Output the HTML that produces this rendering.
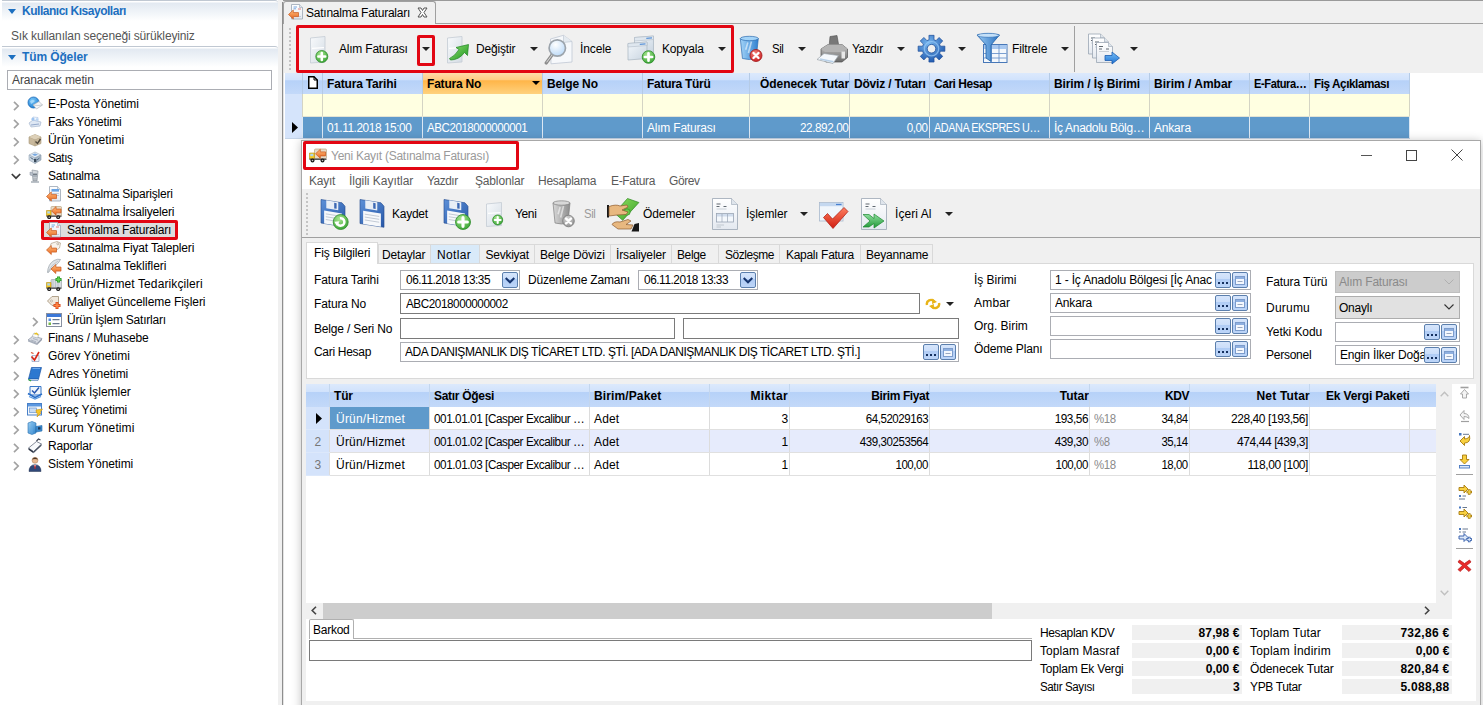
<!DOCTYPE html>
<html lang="tr"><head><meta charset="utf-8"><title>Satınalma Faturaları</title>
<style>
*{box-sizing:border-box;margin:0;padding:0}
html,body{width:1483px;height:705px;overflow:hidden;background:#f0f0f0}
body{position:relative;font-family:"Liberation Sans",sans-serif;font-size:12px;color:#000;letter-spacing:-0.17px}
.a{position:absolute}
.t{position:absolute;white-space:nowrap;line-height:14px;height:14px}
.b{font-weight:bold;letter-spacing:-0.2px}
.n{letter-spacing:-0.5px}
.g{color:#555}
.w{color:#fff}
.hd{position:absolute;left:2px;width:276px;height:21px;background:linear-gradient(#fff 0,#fff 1px,#e2e9f1 2px,#f1f5f9 60%,#fff);border-top:1px solid #c0c8d2;border-radius:0 3px 0 0}
.hd .t{left:20px;top:3px;color:#1c6fc0;font-weight:bold;letter-spacing:-0.48px}
.hd i{position:absolute;left:6px;top:8px;border:4px solid transparent;border-top:5px solid #1c6fc0;border-bottom:0}
.chev{position:absolute;width:6px;height:6px;border-right:1.4px solid #8a8a8a;border-top:1.4px solid #8a8a8a;transform:rotate(45deg)}
.chevd{position:absolute;width:6px;height:6px;border-right:1.4px solid #404040;border-bottom:1.4px solid #404040;transform:rotate(45deg)}
.gh{position:absolute;background:linear-gradient(#dce9fc 0,#d0e2fc 35%,#b6d1f8 36%,#c3d9f9 100%)}
.gho{position:absolute;background:linear-gradient(#ffdcaa 0,#ffcb80 35%,#ffb548 36%,#ffd27e 100%)}
.inp{position:absolute;background:#fff;border:1px solid #abadb3}
.inpd{position:absolute;background:#fff;border:1px solid #7a7a7a}
.eb{position:absolute;width:16px;height:16px;border:1px solid #5b7fad;border-radius:2px;background:linear-gradient(#d6e5fb 0,#cbdefa 42%,#b0ccf5 43%,#bdd5f8 100%)}
</style></head><body>
<!-- left panel -->
<div class="a" style="left:0px;top:0px;width:278px;height:705px;background:#fff"></div>
<div class="hd" style="top:0"><i></i><span class="t">Kullanıcı Kısayolları</span></div>
<div class="t " style="left:11px;top:29px;color:#555;letter-spacing:-0.14px">Sık kullanılan seçeneği sürükleyiniz</div>
<div class="hd" style="top:46px"><i></i><span class="t" style="letter-spacing:-0.12px">Tüm Öğeler</span></div>
<div class="a" style="left:7px;top:70px;width:265px;height:20px;border:1px solid #abadb3;background:#fff"></div>
<div class="t " style="left:12px;top:73px;color:#444;letter-spacing:-0.12px">Aranacak metin</div>
<svg class="a" style="left:12.5px;top:100.5px" width="7" height="10" viewBox="0 0 7 10"><path d="M1 .8L5.2 5L1 9.2" fill="none" stroke="#a2a2a2" stroke-width="1.7"/></svg>
<svg class="a" style="left:27px;top:96px" width="16" height="16" viewBox="0 0 16 16"><defs><radialGradient id="g1" cx="0.4" cy="0.3" r=".8"><stop offset="0" stop-color="#7cc8f8"/><stop offset="1" stop-color="#1478d0"/></radialGradient></defs><circle cx="6.5" cy="6.5" r="5.5" fill="url(#g1)" stroke="#1a6ab8" stroke-width=".8"/><path d="M3 5Q6 3 8 5Q6 7 4 8Z" fill="#b8e4ff" opacity=".7"/><path d="M6 9L12 5.5L15.5 9L9.5 13Z" fill="#f4f6f8" stroke="#a8b0b8" stroke-width=".6"/><path d="M6 9L11 9.5L15.5 9" fill="none" stroke="#b0b8c0" stroke-width=".6"/></svg>
<div class="t " style="left:48px;top:97px;;letter-spacing:-0.11px">E-Posta Yönetimi</div>
<svg class="a" style="left:12.5px;top:118.5px" width="7" height="10" viewBox="0 0 7 10"><path d="M1 .8L5.2 5L1 9.2" fill="none" stroke="#a2a2a2" stroke-width="1.7"/></svg>
<svg class="a" style="left:27px;top:114px" width="16" height="16" viewBox="0 0 16 16"><path d="M2 9L6 6L14 8L13 12L4 13Z" fill="#dfe8f4" stroke="#a8b8d0" stroke-width=".7"/><path d="M5 6L6 3L11 3.5L11 7Z" fill="#f6f9fd" stroke="#a8c0e0" stroke-width=".6"/><circle cx="6" cy="5" r="1.6" fill="#9ec4f0"/><circle cx="10" cy="5.5" r="1.3" fill="#b8d4f4"/><path d="M4 11L12 10" stroke="#8098c0" stroke-width=".8"/></svg>
<div class="t " style="left:48px;top:115px;;letter-spacing:-0.17px">Faks Yönetimi</div>
<svg class="a" style="left:12.5px;top:136.5px" width="7" height="10" viewBox="0 0 7 10"><path d="M1 .8L5.2 5L1 9.2" fill="none" stroke="#a2a2a2" stroke-width="1.7"/></svg>
<svg class="a" style="left:27px;top:132px" width="16" height="16" viewBox="0 0 16 16"><path d="M2 5L8 2.5L14 5V11.5L8 14L2 11.5Z" fill="#c8b89c" stroke="#a89878" stroke-width=".6"/><path d="M2 5L8 7.5L14 5M8 7.5V14" fill="none" stroke="#a89878" stroke-width=".6"/><path d="M2 5L8 2.5L14 5L8 7.5Z" fill="#ddd0b8"/><path d="M8.5 9.5L10.5 11.5L13.5 7" fill="none" stroke="#50483c" stroke-width="1.4"/></svg>
<div class="t " style="left:48px;top:133px;;letter-spacing:0.13px">Ürün Yonetimi</div>
<svg class="a" style="left:12.5px;top:154.5px" width="7" height="10" viewBox="0 0 7 10"><path d="M1 .8L5.2 5L1 9.2" fill="none" stroke="#a2a2a2" stroke-width="1.7"/></svg>
<svg class="a" style="left:27px;top:150px" width="16" height="16" viewBox="0 0 16 16"><path d="M2 5L8 2L14 5L8 8Z" fill="#e4ecf4" stroke="#98a8b8" stroke-width=".6"/><path d="M2 5V10L8 13.5V8Z" fill="#c8d4e0" stroke="#98a8b8" stroke-width=".6"/><path d="M14 5V10L8 13.5V8Z" fill="#a8b8c8" stroke="#8898a8" stroke-width=".6"/><path d="M5 4.5L8 3.5L11 4.5L8 6Z" fill="#78a8e0"/><path d="M3.5 7.5L6.5 9.5M10 10L12.5 8" stroke="#506880" stroke-width="1"/><rect x="7" y="9" width="2.4" height="3" fill="#384858"/></svg>
<div class="t " style="left:48px;top:151px;;letter-spacing:-0.45px;transform:scaleX(0.970);transform-origin:left center">Satış</div>
<svg class="a" style="left:11px;top:173px" width="10" height="7" viewBox="0 0 10 7"><path d="M.8 1L5 5.2L9.200 1" fill="none" stroke="#3c3c3c" stroke-width="1.7"/></svg>
<svg class="a" style="left:27px;top:168px" width="16" height="16" viewBox="0 0 16 16"><path d="M5 2L11 3L10 13H6Z" fill="#d4d8dc" stroke="#9098a0" stroke-width=".7"/><path d="M3 4L6 5V8L3 7Z" fill="#b8c0c8" stroke="#8890a0" stroke-width=".5"/><path d="M6 5H10V9H6Z" fill="#a8b0b8"/><path d="M6 6.5H10" stroke="#687078" stroke-width=".8"/><path d="M4 14H12" stroke="#a0a8b0" stroke-width="1.4"/><path d="M7 9.5V13M9 9.5V13" stroke="#808890" stroke-width=".7"/></svg>
<div class="t " style="left:48px;top:169px;;letter-spacing:-0.22px">Satınalma</div>
<svg class="a" style="left:46px;top:186px" width="16" height="16" viewBox="0 0 16 16"><defs><linearGradient id="g2" x1="0" y1="0" x2="0" y2="1"><stop offset="0" stop-color="#ffffff"/><stop offset="1" stop-color="#e4e9f0"/></linearGradient></defs><path d="M3.5 0.5H11.5L14.5 3.5V15.0H3.5Z" fill="url(#g2)" stroke="#9aa6b4" stroke-width=".8"/><path d="M11.5 0.5V3.5H14.5" fill="#dfe5ec" stroke="#9aa6b4" stroke-width=".6"/><rect x="5.5" y="3" width="7.5" height="2.6" fill="#6aa4e4"/><path d="M6 7.5H13M6 9.5H13" stroke="#b8c4d4" stroke-width=".8"/><defs><linearGradient id="g3" x1="0" y1="0" x2="0" y2="1"><stop offset="0" stop-color="#ffc080"/><stop offset="1" stop-color="#e8641c"/></linearGradient></defs><path d="M0.5 10.5L5.3 6V8.6H10.5V12.6H5.3V15.0Z" fill="url(#g3)" stroke="#c8561a" stroke-width=".7" stroke-linejoin="round"/></svg>
<div class="t " style="left:67px;top:187px;;letter-spacing:-0.21px">Satınalma Siparişleri</div>
<svg class="a" style="left:46px;top:204px" width="16" height="16" viewBox="0 0 16 16"><rect x="5" y="2.5" width="10.5" height="9.5" rx="1" fill="#e8dcc8" stroke="#b09870" stroke-width=".6"/><path d="M0.5 6.5H5V12H0.5Z" fill="#f4c820" stroke="#b89010" stroke-width=".6"/><rect x="1.3" y="7.3" width="2.6" height="2.2" fill="#a8d4f4"/><rect x="0.5" y="11.5" width="15" height="1.4" fill="#585858"/><circle cx="3.2" cy="13.2" r="1.9" fill="#181818"/><circle cx="3.2" cy="13.2" r=".8" fill="#c0c0c0"/><circle cx="12.2" cy="13.2" r="1.9" fill="#181818"/><circle cx="12.2" cy="13.2" r=".8" fill="#c0c0c0"/><defs><linearGradient id="g4" x1="0" y1="0" x2="0" y2="1"><stop offset="0" stop-color="#ffc080"/><stop offset="1" stop-color="#e8641c"/></linearGradient></defs><path d="M5.5 6.875L10.059999999999999 2.6V5.07H15.0V8.87H10.059999999999999V11.149999999999999Z" fill="url(#g4)" stroke="#c8561a" stroke-width=".7" stroke-linejoin="round"/></svg>
<div class="t " style="left:67px;top:205px;;letter-spacing:-0.19px">Satınalma İrsaliyeleri</div>
<div class="a" style="left:41px;top:220px;width:137px;height:20px;border:3px solid #e20613;background:#dddddd;border-radius:2px"></div>
<svg class="a" style="left:46px;top:222px" width="16" height="16" viewBox="0 0 16 16"><defs><linearGradient id="g5" x1="0" y1="0" x2="0" y2="1"><stop offset="0" stop-color="#ffffff"/><stop offset="1" stop-color="#e4e9f0"/></linearGradient></defs><path d="M3.5 0.5H11.5L14.5 3.5V15.0H3.5Z" fill="url(#g5)" stroke="#9aa6b4" stroke-width=".8"/><path d="M11.5 0.5V3.5H14.5" fill="#dfe5ec" stroke="#9aa6b4" stroke-width=".6"/><path d="M5.5 3H9M5.5 4.8H8" stroke="#7aa8e0" stroke-width="1"/><path d="M10 5H13" stroke="#e08080" stroke-width="1"/><path d="M6 12.5H13" stroke="#b8c4d4" stroke-width=".8"/><defs><linearGradient id="g6" x1="0" y1="0" x2="0" y2="1"><stop offset="0" stop-color="#ffc080"/><stop offset="1" stop-color="#e8641c"/></linearGradient></defs><path d="M0.5 10.5L5.3 6V8.6H10.5V12.6H5.3V15.0Z" fill="url(#g6)" stroke="#c8561a" stroke-width=".7" stroke-linejoin="round"/></svg>
<div class="t " style="left:67px;top:223px;;letter-spacing:-0.23px">Satınalma Faturaları</div>
<svg class="a" style="left:46px;top:240px" width="16" height="16" viewBox="0 0 16 16"><path d="M5 3.5L11 1.5L14.5 3L13.5 8L9 11L4 7Z" fill="#f8f4ec" stroke="#b0a088" stroke-width=".7"/><circle cx="11.8" cy="3.8" r="1" fill="#fff" stroke="#a09078" stroke-width=".6"/><defs><linearGradient id="g7" x1="0" y1="0" x2="0" y2="1"><stop offset="0" stop-color="#ffc080"/><stop offset="1" stop-color="#e8641c"/></linearGradient></defs><path d="M0.5 10.0L5.3 5.5V8.1H10.5V12.1H5.3V14.5Z" fill="url(#g7)" stroke="#c8561a" stroke-width=".7" stroke-linejoin="round"/></svg>
<div class="t " style="left:67px;top:241px;;letter-spacing:-0.16px">Satınalma Fiyat Talepleri</div>
<svg class="a" style="left:46px;top:258px" width="16" height="16" viewBox="0 0 16 16"><path d="M1.5 14.5Q2 6 8 2.5Q12 0.5 14.5 1.5Q13 5 9 8Q5 10 2.5 14.5Z" fill="#e0e4e8" stroke="#98a0a8" stroke-width=".7"/><path d="M2 14Q5 7 12 3" fill="none" stroke="#a8b0b8" stroke-width=".6"/><defs><linearGradient id="g8" x1="0" y1="0" x2="0" y2="1"><stop offset="0" stop-color="#ffc080"/><stop offset="1" stop-color="#e8641c"/></linearGradient></defs><path d="M5 11.0L9.8 6.5V9.1H15.0V13.1H9.8V15.5Z" fill="url(#g8)" stroke="#c8561a" stroke-width=".7" stroke-linejoin="round"/></svg>
<div class="t " style="left:67px;top:259px;;letter-spacing:-0.06px">Satınalma Teklifleri</div>
<svg class="a" style="left:46px;top:276px" width="16" height="16" viewBox="0 0 16 16"><rect x="5" y="3.5" width="10.5" height="8.5" rx=".8" fill="#d8dce0" stroke="#9098a0" stroke-width=".6"/><path d="M7 4V12M9.5 4V12M12 4V12" stroke="#b0b8c0" stroke-width=".7"/><path d="M0.5 6.5H5V12H0.5Z" fill="#f4c820" stroke="#b89010" stroke-width=".6"/><rect x="1.3" y="7.3" width="2.6" height="2.2" fill="#a8d4f4"/><rect x="0.5" y="11.5" width="15" height="1.4" fill="#585858"/><circle cx="3.2" cy="13.2" r="1.9" fill="#181818"/><circle cx="3.2" cy="13.2" r=".8" fill="#c0c0c0"/><circle cx="12.2" cy="13.2" r="1.9" fill="#181818"/><circle cx="12.2" cy="13.2" r=".8" fill="#c0c0c0"/><path d="M9.5 3.5H15.500M12.5 0.5V6.5" stroke="#2a9a2a" stroke-width="3"/><path d="M10.3 3.5H14.7M12.5 1.3V5.700" stroke="#60d050" stroke-width="1.6"/></svg>
<div class="t " style="left:67px;top:277px;;letter-spacing:0.10px">Ürün/Hizmet Tedarikçileri</div>
<svg class="a" style="left:46px;top:294px" width="16" height="16" viewBox="0 0 16 16"><path d="M1.5 7L6 2.500H12.500V11.500H6Z" fill="#f0e8dc" stroke="#a89880" stroke-width=".9" stroke-linejoin="round"/><circle cx="5.5" cy="7" r="1" fill="#fff" stroke="#a09078" stroke-width=".6"/><path d="M7.5 11.5H14.500M11 8V15" stroke="#d84818" stroke-width="3"/><path d="M8.3 11.5H13.700M11 8.8V14.200" stroke="#ff8848" stroke-width="1.5"/></svg>
<div class="t " style="left:67px;top:295px;;letter-spacing:-0.09px">Maliyet Güncelleme Fişleri</div>
<svg class="a" style="left:31.5px;top:316.5px" width="7" height="10" viewBox="0 0 7 10"><path d="M1 .8L5.2 5L1 9.2" fill="none" stroke="#a2a2a2" stroke-width="1.7"/></svg>
<svg class="a" style="left:46px;top:312px" width="16" height="16" viewBox="0 0 16 16"><rect x=".5" y="1.500" width="15" height="13" fill="#fff" stroke="#8890a0" stroke-width="1"/><rect x="1" y="2" width="14" height="3" fill="#3c78d8"/><rect x="2.5" y="6.5" width="2.500" height="2.500" fill="#5890e0"/><rect x="2.5" y="10.500" width="2.500" height="2.500" fill="#78b848"/><path d="M6.5 7.700H13.500M6.500 11.700H13.500" stroke="#687890" stroke-width="1.2"/></svg>
<div class="t " style="left:67px;top:313px;;letter-spacing:-0.23px">Ürün İşlem Satırları</div>
<svg class="a" style="left:12.5px;top:334.5px" width="7" height="10" viewBox="0 0 7 10"><path d="M1 .8L5.2 5L1 9.2" fill="none" stroke="#a2a2a2" stroke-width="1.7"/></svg>
<svg class="a" style="left:27px;top:330px" width="16" height="16" viewBox="0 0 16 16"><path d="M1 10L6 6L15 8.500L10 13.500Z" fill="#d8dce4" stroke="#8c94a4" stroke-width=".7"/><path d="M1 10V11.500L10 15V13.500Z" fill="#a8b0bc"/><path d="M10 13.500L15 8.500V10L10 15Z" fill="#8c94a4"/><path d="M5 6.500L7 3L12 4.500L10.500 8Z" fill="#fafafa" stroke="#a0a8b0" stroke-width=".6"/><path d="M7.500 4L9.500 3.300L11 5" stroke="#e8c020" stroke-width="1.4" fill="none"/><path d="M4 10L9 11.800M6 8.500L11 10.200" stroke="#98a0b0" stroke-width=".7"/></svg>
<div class="t " style="left:48px;top:331px;;letter-spacing:-0.08px">Finans / Muhasebe</div>
<svg class="a" style="left:12.5px;top:352.5px" width="7" height="10" viewBox="0 0 7 10"><path d="M1 .8L5.2 5L1 9.2" fill="none" stroke="#a2a2a2" stroke-width="1.7"/></svg>
<svg class="a" style="left:27px;top:348px" width="16" height="16" viewBox="0 0 16 16"><path d="M5 7.5H12V13.500H5Z" fill="#f4f6fa" stroke="#90a0c0" stroke-width=".7"/><path d="M4.500 8.500L7.500 12L12 4" fill="none" stroke="#d82818" stroke-width="1.6"/><path d="M4 4.500L6.500 5.500" stroke="#d85030" stroke-width="1.2"/></svg>
<div class="t " style="left:48px;top:349px;;letter-spacing:-0.05px">Görev Yönetimi</div>
<svg class="a" style="left:12.5px;top:370.5px" width="7" height="10" viewBox="0 0 7 10"><path d="M1 .8L5.2 5L1 9.2" fill="none" stroke="#a2a2a2" stroke-width="1.7"/></svg>
<svg class="a" style="left:27px;top:366px" width="16" height="16" viewBox="0 0 16 16"><path d="M4.5 1.5H14.500L11.500 13H1.500Z" fill="#2c78d0" stroke="#1c58a8" stroke-width=".7"/><path d="M1.500 13L2 14.500H11L11.500 13Z" fill="#e8f0f8" stroke="#1c58a8" stroke-width=".5"/><path d="M5.500 2.500H13" stroke="#78b0f0" stroke-width=".9"/><path d="M1.500 13.500L4 14.800" stroke="#38a838" stroke-width="1.3"/></svg>
<div class="t " style="left:48px;top:367px;;letter-spacing:-0.07px">Adres Yönetimi</div>
<svg class="a" style="left:12.5px;top:388.5px" width="7" height="10" viewBox="0 0 7 10"><path d="M1 .8L5.2 5L1 9.2" fill="none" stroke="#a2a2a2" stroke-width="1.7"/></svg>
<svg class="a" style="left:27px;top:384px" width="16" height="16" viewBox="0 0 16 16"><path d="M3 2.500H14V11H3Z" fill="#f0f6fc" stroke="#3878c8" stroke-width="1"/><path d="M5 6.500L7.500 9L12 3.500" fill="none" stroke="#2858b0" stroke-width="1.5"/><path d="M1 9.500L8 13.500L15 10" fill="none" stroke="#2c70c8" stroke-width="1.6"/><path d="M2 12.500L8 15L14 12.500" fill="none" stroke="#5898e0" stroke-width="1.2"/></svg>
<div class="t " style="left:48px;top:385px;;letter-spacing:-0.04px">Günlük İşlemler</div>
<svg class="a" style="left:12.5px;top:406.5px" width="7" height="10" viewBox="0 0 7 10"><path d="M1 .8L5.2 5L1 9.2" fill="none" stroke="#a2a2a2" stroke-width="1.7"/></svg>
<svg class="a" style="left:27px;top:402px" width="16" height="16" viewBox="0 0 16 16"><rect x=".5" y="1.500" width="14" height="11.500" fill="#f4f8fc" stroke="#4880c8" stroke-width="1"/><rect x="1" y="2" width="13" height="2.500" fill="#5c98e0"/><rect x="2.500" y="6" width="7" height="4.500" fill="#c8dcf4" stroke="#5888c8" stroke-width=".6"/><path d="M9 8L15.500 7L13 10.500L14 11L10 15L11 11.500L9.500 11Z" fill="#f8c828" stroke="#c89010" stroke-width=".6"/></svg>
<div class="t " style="left:48px;top:403px;;letter-spacing:-0.15px">Süreç Yönetimi</div>
<svg class="a" style="left:12.5px;top:424.5px" width="7" height="10" viewBox="0 0 7 10"><path d="M1 .8L5.2 5L1 9.2" fill="none" stroke="#a2a2a2" stroke-width="1.7"/></svg>
<svg class="a" style="left:27px;top:420px" width="16" height="16" viewBox="0 0 16 16"><defs><linearGradient id="g9" x1="0" y1="0" x2="1" y2="1"><stop offset="0" stop-color="#9cd0f4"/><stop offset="1" stop-color="#2c80c8"/></linearGradient></defs><path d="M1 3L5 1.500L9 3V13L5 14.500L1 13Z" fill="url(#g9)" stroke="#2870b0" stroke-width=".6"/><path d="M5 1.500V14.500" stroke="#68b0e8" stroke-width=".6"/><path d="M9 6.500L15 5.500V11L9 12Z" fill="#3c8cd0" stroke="#2468a8" stroke-width=".6"/><rect x="11" y="7.200" width="2.500" height="2.300" fill="#1c3c60"/></svg>
<div class="t " style="left:48px;top:421px;;letter-spacing:0.09px">Kurum Yönetimi</div>
<svg class="a" style="left:12.5px;top:442.5px" width="7" height="10" viewBox="0 0 7 10"><path d="M1 .8L5.2 5L1 9.2" fill="none" stroke="#a2a2a2" stroke-width="1.7"/></svg>
<svg class="a" style="left:27px;top:438px" width="16" height="16" viewBox="0 0 16 16"><path d="M1.500 10L9.500 3.500L14.500 6L6.500 13.500Z" fill="#f8fafc" stroke="#687080" stroke-width=".8"/><path d="M1.500 10V11.800L6.500 15.300V13.500Z" fill="#283040"/><path d="M6.500 13.500L14.500 6V7.800L6.500 15.300Z" fill="#485060"/><path d="M9.500 3L11.500 1L13.500 2" fill="none" stroke="#384050" stroke-width="1.1"/></svg>
<div class="t " style="left:48px;top:439px;;letter-spacing:-0.18px">Raporlar</div>
<svg class="a" style="left:12.5px;top:460.5px" width="7" height="10" viewBox="0 0 7 10"><path d="M1 .8L5.2 5L1 9.2" fill="none" stroke="#a2a2a2" stroke-width="1.7"/></svg>
<svg class="a" style="left:27px;top:456px" width="16" height="16" viewBox="0 0 16 16"><circle cx="8" cy="4.300" r="3" fill="#e8b890" stroke="#a87850" stroke-width=".5"/><path d="M5 3.500Q8 -.5 11 3.500Q8 2.500 5 3.500Z" fill="#4c3828"/><path d="M2 15.500Q2 9 8 8.500Q14 9 14 15.500Z" fill="#304878" stroke="#203050" stroke-width=".5"/><path d="M6.500 8.800L8 11.500L9.500 8.800Z" fill="#fff"/><path d="M7.600 9.500L8 13L8.400 9.500Z" fill="#c82828" stroke="#c82828" stroke-width=".6"/></svg>
<div class="t " style="left:48px;top:457px;;letter-spacing:-0.09px">Sistem Yönetimi</div>
<!-- main -->
<div class="a" style="left:283px;top:0px;width:1200px;height:1px;background:#9a9a9a"></div>
<div class="a" style="left:283px;top:23px;width:1200px;height:1px;background:#a0a0a0"></div>
<div class="a" style="left:282px;top:2px;width:1px;height:703px;background:#8e8e8e"></div>
<div class="a" style="left:283px;top:24px;width:1px;height:681px;background:#e4e4e4"></div>
<div class="a" style="left:283px;top:1px;width:153px;height:23px;background:#f0f0f0;border:1px solid #a0a0a0;border-bottom:0;border-radius:3px 3px 0 0"></div>
<svg class="a" style="left:288px;top:4px" width="16" height="16" viewBox="0 0 16 16"><defs><linearGradient id="g10" x1="0" y1="0" x2="0" y2="1"><stop offset="0" stop-color="#ffffff"/><stop offset="1" stop-color="#e4e9f0"/></linearGradient></defs><path d="M3.5 0.5H11.5L14.5 3.5V15.0H3.5Z" fill="url(#g10)" stroke="#9aa6b4" stroke-width=".8"/><path d="M11.5 0.5V3.5H14.5" fill="#dfe5ec" stroke="#9aa6b4" stroke-width=".6"/><path d="M5.5 3H9M5.5 4.8H8" stroke="#7aa8e0" stroke-width="1"/><path d="M10 5H13" stroke="#e08080" stroke-width="1"/><path d="M6 12.5H13" stroke="#b8c4d4" stroke-width=".8"/><defs><linearGradient id="g11" x1="0" y1="0" x2="0" y2="1"><stop offset="0" stop-color="#ffc080"/><stop offset="1" stop-color="#e8641c"/></linearGradient></defs><path d="M0.5 10.5L5.3 6V8.6H10.5V12.6H5.3V15.0Z" fill="url(#g11)" stroke="#c8561a" stroke-width=".7" stroke-linejoin="round"/></svg>
<div class="t " style="left:306px;top:6px;;letter-spacing:-0.23px">Satınalma Faturaları</div>
<svg class="a" style="left:417px;top:7px" width="11" height="11" viewBox="0 0 11 11"><path d="M1 1L4 1L5.5 3.5L7 1L10 1L7 5.5L10 10L7 10L5.5 7.5L4 10L1 10L4 5.5Z" fill="#fff" stroke="#555" stroke-width="1"/></svg>
<div class="a" style="left:289px;top:28px;width:2px;height:2px;background:#c4c4c4"></div>
<div class="a" style="left:289px;top:32px;width:2px;height:2px;background:#c4c4c4"></div>
<div class="a" style="left:289px;top:36px;width:2px;height:2px;background:#c4c4c4"></div>
<div class="a" style="left:289px;top:40px;width:2px;height:2px;background:#c4c4c4"></div>
<div class="a" style="left:289px;top:44px;width:2px;height:2px;background:#c4c4c4"></div>
<div class="a" style="left:289px;top:48px;width:2px;height:2px;background:#c4c4c4"></div>
<div class="a" style="left:289px;top:52px;width:2px;height:2px;background:#c4c4c4"></div>
<div class="a" style="left:289px;top:56px;width:2px;height:2px;background:#c4c4c4"></div>
<div class="a" style="left:289px;top:60px;width:2px;height:2px;background:#c4c4c4"></div>
<div class="a" style="left:289px;top:64px;width:2px;height:2px;background:#c4c4c4"></div>
<div class="a" style="left:289px;top:68px;width:2px;height:2px;background:#c4c4c4"></div>
<div class="a" style="left:296px;top:25px;width:438px;height:48px;border:3px solid #e20613;border-radius:2px"></div>
<div class="a" style="left:417px;top:35px;width:18px;height:31px;border:3px solid #e20613;border-radius:2px"></div>
<svg class="a" style="left:307px;top:34px" width="26" height="30" viewBox="0 0 26 30"><defs><linearGradient id="g12" x1="0" y1="0" x2="1" y2="1"><stop offset="0" stop-color="#f8fafc"/><stop offset="1" stop-color="#d4dce4"/></linearGradient></defs><path d="M3.5 4.0L18.0 2.5V28.0L3.5 29.0Z" fill="url(#g12)" stroke="#c4ccd4" stroke-width=".8"/><path d="M5.0 14.425L17.0 13.629999999999999" stroke="#fff" stroke-width="1.2"/><defs><radialGradient id="g13" cx="0.4" cy="0.3" r=".8"><stop offset="0" stop-color="#a8e890"/><stop offset="1" stop-color="#2f9e2c"/></radialGradient></defs><circle cx="14.8" cy="22.5" r="6" fill="url(#g13)" stroke="#2c8a2a" stroke-width=".8"/><path d="M11.32 22.5H18.28M14.8 19.02V25.98" stroke="#fff" stroke-width="2.52" stroke-linecap="round"/></svg>
<div class="t " style="left:339px;top:42px;;letter-spacing:-0.21px">Alım Faturası</div>
<svg class="a" style="left:422.0px;top:47px" width="8" height="4" viewBox="0 0 8 4"><path d="M0 0H8L4 4Z" fill="#222"/></svg>
<svg class="a" style="left:445px;top:34px" width="28" height="30" viewBox="0 0 28 30"><defs><linearGradient id="g15" x1="0" y1="0" x2="1" y2="1"><stop offset="0" stop-color="#f8fafc"/><stop offset="1" stop-color="#d4dce4"/></linearGradient></defs><path d="M2.5 4.0L17.0 2.5V28.0L2.5 29.0Z" fill="url(#g15)" stroke="#c4ccd4" stroke-width=".8"/><path d="M4.0 14.425L16.0 13.629999999999999" stroke="#fff" stroke-width="1.2"/><defs><linearGradient id="g14" x1="0" y1="0" x2="1" y2="1"><stop offset="0" stop-color="#90e070"/><stop offset="1" stop-color="#1c9420"/></linearGradient></defs><path d="M4.500 24.500Q10 22 14 15.500L11 13.500L23.500 10.500L22.500 21.500L19.500 18.500Q14 26 5.500 26Z" fill="url(#g14)" stroke="#1c8420" stroke-width=".7" stroke-linejoin="round"/></svg>
<div class="t " style="left:476px;top:42px;;letter-spacing:-0.17px">Değiştir</div>
<svg class="a" style="left:529.5px;top:47px" width="8" height="4" viewBox="0 0 8 4"><path d="M0 0H8L4 4Z" fill="#222"/></svg>
<svg class="a" style="left:544px;top:33px" width="30" height="32" viewBox="0 0 30 32"><path d="M6.500 6L19.500 2.300L28 8.500V29L7 30.800Z" fill="#f6f8fb" stroke="#c0c8d4" stroke-width=".8"/><path d="M19.500 2.300V9.500L28 8.500" fill="#e4eaf0" stroke="#c0c8d4" stroke-width=".7"/><defs><radialGradient id="g16" cx="0.4" cy="0.3" r=".8"><stop offset="0" stop-color="#ffffff"/><stop offset="1" stop-color="#b4d6f8"/></radialGradient></defs><path d="M8 22L2.200 30" stroke="#8c8c8c" stroke-width="3.200" stroke-linecap="round"/><path d="M8 22L2.600 29.300" stroke="#dcdcdc" stroke-width="1"/><circle cx="13.300" cy="15" r="8.200" fill="url(#g16)" stroke="#9ca4ac" stroke-width="1.700"/></svg>
<div class="t " style="left:580px;top:42px;;letter-spacing:-0.11px">İncele</div>
<svg class="a" style="left:626px;top:34px" width="32" height="30" viewBox="0 0 32 30"><defs><linearGradient id="g17" x1="0" y1="0" x2="1" y2="1"><stop offset="0" stop-color="#f4f8fc"/><stop offset="1" stop-color="#c8d4e0"/></linearGradient></defs><path d="M8.5 3.5L27.5 2V18.5L8.5 20Z" fill="url(#g17)" stroke="#a8b4c0" stroke-width=".7"/><path d="M8.5 3.5L27.5 2V5.5L8.5 7Z" fill="#dfe7ef" stroke="#a8b4c0" stroke-width=".5"/><path d="M20.28 4.3L26.0 3.8" stroke="#5c94d8" stroke-width="1.300"/><defs><linearGradient id="g18" x1="0" y1="0" x2="1" y2="1"><stop offset="0" stop-color="#f4f8fc"/><stop offset="1" stop-color="#c8d4e0"/></linearGradient></defs><path d="M2 9.5L21 8V24.5L2 26Z" fill="url(#g18)" stroke="#a8b4c0" stroke-width=".7"/><path d="M2 9.5L21 8V11.5L2 13Z" fill="#dfe7ef" stroke="#a8b4c0" stroke-width=".5"/><path d="M13.78 10.3L19.5 9.8" stroke="#5c94d8" stroke-width="1.300"/><defs><radialGradient id="g19" cx="0.4" cy="0.3" r=".8"><stop offset="0" stop-color="#a8e890"/><stop offset="1" stop-color="#2f9e2c"/></radialGradient></defs><circle cx="22.5" cy="23" r="6.3" fill="url(#g19)" stroke="#2c8a2a" stroke-width=".8"/><path d="M18.846 23H26.154M22.5 19.346V26.654" stroke="#fff" stroke-width="2.65" stroke-linecap="round"/></svg>
<div class="t " style="left:662px;top:42px;;letter-spacing:-0.26px">Kopyala</div>
<svg class="a" style="left:717.5px;top:47px" width="8" height="4" viewBox="0 0 8 4"><path d="M0 0H8L4 4Z" fill="#222"/></svg>
<svg class="a" style="left:739px;top:34px" width="28" height="30" viewBox="0 0 28 30"><defs><linearGradient id="g20" x1="0" y1="0" x2="1" y2="0"><stop offset="0" stop-color="#a4d4f8"/><stop offset="1" stop-color="#2f80d0"/></linearGradient></defs><path d="M1.3 4.5L3.46 24.5Q10.3 26.5 17.14 24.5L19.3 4.5Z" fill="url(#g20)" stroke="#2c6cb0" stroke-width=".7"/><ellipse cx="10.3" cy="4.5" rx="9.0" ry="2.2" fill="#a4d4f8" stroke="#2c6cb0" stroke-width=".7"/><path d="M8.86 8.5L6.699999999999999 15.7M12.46 7.5L9.4 19.0" stroke="#fff" stroke-width="1.6" opacity=".55"/><defs><radialGradient id="g21" cx="0.4" cy="0.3" r=".8"><stop offset="0" stop-color="#f08078"/><stop offset="1" stop-color="#c8181c"/></radialGradient></defs><circle cx="17" cy="21.5" r="6" fill="url(#g21)" stroke="#a01414" stroke-width=".8"/><path d="M14.48 18.98L19.52 24.02M19.52 18.98L14.48 24.02" stroke="#fff" stroke-width="2.40" stroke-linecap="round"/></svg>
<div class="t " style="left:772px;top:42px;;letter-spacing:-0.45px;transform:scaleX(0.948);transform-origin:left center">Sil</div>
<svg class="a" style="left:797.5px;top:47px" width="8" height="4" viewBox="0 0 8 4"><path d="M0 0H8L4 4Z" fill="#222"/></svg>
<svg class="a" style="left:816px;top:34px" width="34" height="30" viewBox="0 0 34 30"><defs><linearGradient id="g22" x1="0" y1="0" x2="0" y2="1"><stop offset="0" stop-color="#c8c8c8"/><stop offset="1" stop-color="#686868"/></linearGradient></defs><path d="M14 2.500L21 1.500L23 13H13Z" fill="#787878" stroke="#505050" stroke-width=".6"/><path d="M5 15L12 10.500H26L31.500 15V23.500L26 28H10L5 24Z" fill="url(#g22)" stroke="#505050" stroke-width=".7"/><path d="M5 15L12 10.500H26L31.500 15L25 18H9Z" fill="#b4b4b4"/><path d="M8 19.500L1 25.500L17 29.500L22.500 21.500Z" fill="#f4f8fc" stroke="#98a0a8" stroke-width=".7"/><path d="M4 25L17.500 27.800" stroke="#b8d0e8" stroke-width="1.400"/><rect x="25.500" y="17.500" width="3.500" height="7" fill="#e8e8e8"/></svg>
<div class="t " style="left:852px;top:42px;;letter-spacing:-0.45px;transform:scaleX(0.986);transform-origin:left center">Yazdır</div>
<svg class="a" style="left:896.5px;top:47px" width="8" height="4" viewBox="0 0 8 4"><path d="M0 0H8L4 4Z" fill="#222"/></svg>
<svg class="a" style="left:916px;top:34px" width="30" height="30" viewBox="0 0 30 30"><defs><radialGradient id="g23" cx="0.4" cy="0.3" r=".8"><stop offset="0" stop-color="#78b8f0"/><stop offset="1" stop-color="#1850a8"/></radialGradient></defs><path d="M24.46 12.22L28.86 12.13L28.86 17.27L24.46 17.18L23.59 19.28L26.76 22.33L23.13 25.96L20.08 22.79L17.98 23.66L18.07 28.06L12.93 28.06L13.02 23.66L10.92 22.79L7.87 25.96L4.24 22.33L7.41 19.28L6.54 17.18L2.14 17.27L2.14 12.13L6.54 12.22L7.41 10.12L4.24 7.07L7.87 3.44L10.92 6.61L13.02 5.74L12.93 1.34L18.07 1.34L17.98 5.74L20.08 6.61L23.13 3.44L26.76 7.07L23.59 10.12Z" fill="url(#g23)" stroke="#1c4c98" stroke-width=".7" stroke-linejoin="round"/><circle cx="15.5" cy="14.7" r="4.3" fill="#f0f0f0" stroke="#1c4c98" stroke-width=".8"/><circle cx="15.5" cy="14.7" r="7.2" fill="none" stroke="#9cccf8" stroke-width="1.2" opacity=".7"/></svg>
<svg class="a" style="left:957.5px;top:47px" width="8" height="4" viewBox="0 0 8 4"><path d="M0 0H8L4 4Z" fill="#222"/></svg>
<svg class="a" style="left:976px;top:32px" width="34" height="34" viewBox="0 0 34 34"><rect x="7.500" y="12.500" width="23.500" height="18" fill="#f4f8fc" stroke="#4878b8" stroke-width="1"/><rect x="8" y="13" width="22.500" height="4" fill="#a8c8f0"/><path d="M8 21.500H30.500M8 26H30.500M15.500 13V30M23 13V30" stroke="#6c94cc" stroke-width=".9"/><defs><linearGradient id="g24" x1="0" y1="0" x2="1" y2="0"><stop offset="0" stop-color="#9cccf4"/><stop offset="1" stop-color="#2870c0"/></linearGradient></defs><path d="M1 3Q12 0 23.500 3L15 13V29.500L10 26V13Z" fill="url(#g24)" stroke="#2060a8" stroke-width=".8" stroke-linejoin="round"/><ellipse cx="12.200" cy="3.300" rx="11" ry="2" fill="#c4e0f8" stroke="#2868b0" stroke-width=".6"/></svg>
<div class="t " style="left:1012px;top:42px;;letter-spacing:-0.10px">Filtrele</div>
<svg class="a" style="left:1060.5px;top:47px" width="8" height="4" viewBox="0 0 8 4"><path d="M0 0H8L4 4Z" fill="#222"/></svg>
<svg class="a" style="left:1087px;top:33px" width="34" height="34" viewBox="0 0 34 34"><defs><linearGradient id="g26" x1="0" y1="0" x2="0" y2="1"><stop offset="0" stop-color="#ffffff"/><stop offset="1" stop-color="#e4e9f0"/></linearGradient></defs><path d="M1.5 1H13.5L17.5 5V21H1.5Z" fill="url(#g26)" stroke="#9aa6b4" stroke-width=".8"/><path d="M13.5 1V5H17.5" fill="#dfe5ec" stroke="#9aa6b4" stroke-width=".6"/><path d="M4.0 5H8.0M4.0 7.5H7.0M11.0 7.5H14.0" stroke="#606870" stroke-width="1"/><path d="M4.0 10H14.0" stroke="#b8c0c8" stroke-width=".7"/><defs><linearGradient id="g27" x1="0" y1="0" x2="0" y2="1"><stop offset="0" stop-color="#ffffff"/><stop offset="1" stop-color="#e4e9f0"/></linearGradient></defs><path d="M5.5 5H17.5L21.5 9V25H5.5Z" fill="url(#g27)" stroke="#9aa6b4" stroke-width=".8"/><path d="M17.5 5V9H21.5" fill="#dfe5ec" stroke="#9aa6b4" stroke-width=".6"/><path d="M8.0 9H12.0M8.0 11.5H11.0M15.0 11.5H18.0" stroke="#606870" stroke-width="1"/><path d="M8.0 14H18.0" stroke="#b8c0c8" stroke-width=".7"/><defs><linearGradient id="g28" x1="0" y1="0" x2="0" y2="1"><stop offset="0" stop-color="#ffffff"/><stop offset="1" stop-color="#e4e9f0"/></linearGradient></defs><path d="M9.5 9.5H21.5L25.5 13.5V29.5H9.5Z" fill="url(#g28)" stroke="#9aa6b4" stroke-width=".8"/><path d="M21.5 9.5V13.5H25.5" fill="#dfe5ec" stroke="#9aa6b4" stroke-width=".6"/><path d="M12.0 13.5H16.0M12.0 16.0H15.0M19.0 16.0H22.0" stroke="#606870" stroke-width="1"/><path d="M12.0 18.5H22.0" stroke="#b8c0c8" stroke-width=".7"/><defs><linearGradient id="g25" x1="0" y1="0" x2="0" y2="1"><stop offset="0" stop-color="#78c0f8"/><stop offset="1" stop-color="#1c70d0"/></linearGradient></defs><path d="M18 22.500H25V19L32.500 25L25 31V27.500H18Z" fill="url(#g25)" stroke="#1c5cb0" stroke-width=".8" stroke-linejoin="round"/></svg>
<svg class="a" style="left:1129.5px;top:47px" width="8" height="4" viewBox="0 0 8 4"><path d="M0 0H8L4 4Z" fill="#222"/></svg>
<div class="a" style="left:1074px;top:26px;width:1px;height:46px;background:#a0a0a0"></div>
<div class="a" style="left:284px;top:73px;width:1199px;height:632px;background:#fff"></div>
<div class="gh" style="left:285px;top:73px;width:1125px;height:21px"></div>
<div class="gho" style="left:423px;top:73px;width:119px;height:21px"></div>
<div class="a" style="left:285px;top:94px;width:1125px;height:23px;background:#ffffe1"></div>
<div class="a" style="left:285px;top:94px;width:17px;height:44px;background:#d5e4fb"></div>
<div class="a" style="left:303px;top:117px;width:1107px;height:21px;background:#5f9acb"></div>
<div class="a" style="left:302px;top:73px;width:1px;height:21px;background:#b5cbe6"></div>
<div class="a" style="left:302px;top:94px;width:1px;height:23px;background:#d4d4c4"></div>
<div class="a" style="left:302px;top:117px;width:1px;height:21px;background:#dce8f4"></div>
<div class="a" style="left:322px;top:73px;width:1px;height:21px;background:#b5cbe6"></div>
<div class="a" style="left:322px;top:94px;width:1px;height:23px;background:#d4d4c4"></div>
<div class="a" style="left:322px;top:117px;width:1px;height:21px;background:#dce8f4"></div>
<div class="a" style="left:422px;top:73px;width:1px;height:21px;background:#b5cbe6"></div>
<div class="a" style="left:422px;top:94px;width:1px;height:23px;background:#d4d4c4"></div>
<div class="a" style="left:422px;top:117px;width:1px;height:21px;background:#dce8f4"></div>
<div class="a" style="left:542px;top:73px;width:1px;height:21px;background:#b5cbe6"></div>
<div class="a" style="left:542px;top:94px;width:1px;height:23px;background:#d4d4c4"></div>
<div class="a" style="left:542px;top:117px;width:1px;height:21px;background:#dce8f4"></div>
<div class="a" style="left:642px;top:73px;width:1px;height:21px;background:#b5cbe6"></div>
<div class="a" style="left:642px;top:94px;width:1px;height:23px;background:#d4d4c4"></div>
<div class="a" style="left:642px;top:117px;width:1px;height:21px;background:#dce8f4"></div>
<div class="a" style="left:749px;top:73px;width:1px;height:21px;background:#b5cbe6"></div>
<div class="a" style="left:749px;top:94px;width:1px;height:23px;background:#d4d4c4"></div>
<div class="a" style="left:749px;top:117px;width:1px;height:21px;background:#dce8f4"></div>
<div class="a" style="left:849px;top:73px;width:1px;height:21px;background:#b5cbe6"></div>
<div class="a" style="left:849px;top:94px;width:1px;height:23px;background:#d4d4c4"></div>
<div class="a" style="left:849px;top:117px;width:1px;height:21px;background:#dce8f4"></div>
<div class="a" style="left:929px;top:73px;width:1px;height:21px;background:#b5cbe6"></div>
<div class="a" style="left:929px;top:94px;width:1px;height:23px;background:#d4d4c4"></div>
<div class="a" style="left:929px;top:117px;width:1px;height:21px;background:#dce8f4"></div>
<div class="a" style="left:1049px;top:73px;width:1px;height:21px;background:#b5cbe6"></div>
<div class="a" style="left:1049px;top:94px;width:1px;height:23px;background:#d4d4c4"></div>
<div class="a" style="left:1049px;top:117px;width:1px;height:21px;background:#dce8f4"></div>
<div class="a" style="left:1149px;top:73px;width:1px;height:21px;background:#b5cbe6"></div>
<div class="a" style="left:1149px;top:94px;width:1px;height:23px;background:#d4d4c4"></div>
<div class="a" style="left:1149px;top:117px;width:1px;height:21px;background:#dce8f4"></div>
<div class="a" style="left:1249px;top:73px;width:1px;height:21px;background:#b5cbe6"></div>
<div class="a" style="left:1249px;top:94px;width:1px;height:23px;background:#d4d4c4"></div>
<div class="a" style="left:1249px;top:117px;width:1px;height:21px;background:#dce8f4"></div>
<div class="a" style="left:1309px;top:73px;width:1px;height:21px;background:#b5cbe6"></div>
<div class="a" style="left:1309px;top:94px;width:1px;height:23px;background:#d4d4c4"></div>
<div class="a" style="left:1309px;top:117px;width:1px;height:21px;background:#dce8f4"></div>
<div class="a" style="left:1409px;top:73px;width:1px;height:21px;background:#b5cbe6"></div>
<div class="a" style="left:1409px;top:94px;width:1px;height:23px;background:#d4d4c4"></div>
<div class="a" style="left:1409px;top:117px;width:1px;height:21px;background:#dce8f4"></div>
<div class="a" style="left:303px;top:116px;width:1107px;height:1px;background:#e4e4d4"></div>
<div class="a" style="left:285px;top:138px;width:1125px;height:1px;background:#c4d4e8"></div>
<svg class="a" style="left:308px;top:76px" width="10" height="13" viewBox="0 0 10 13"><path d="M0.75 0.75H6L9.25 4V12.25H0.75Z" fill="#fff" stroke="#000" stroke-width="1.5"/><path d="M6 0.75V4H9.25" fill="none" stroke="#000" stroke-width="1"/></svg>
<div class="t b" style="left:327px;top:77px;;letter-spacing:-0.17px">Fatura Tarihi</div>
<div class="t b" style="left:427px;top:77px;;letter-spacing:-0.20px">Fatura No</div>
<div class="t b" style="left:547px;top:77px;;letter-spacing:-0.15px">Belge No</div>
<div class="t b" style="left:647px;top:77px;;letter-spacing:-0.29px">Fatura Türü</div>
<div class="t b" style="left:760px;top:77px;;letter-spacing:-0.05px">Ödenecek Tutar</div>
<div class="t b" style="left:854px;top:77px;">Döviz / Tutarı</div>
<div class="t b" style="left:934px;top:77px;;letter-spacing:-0.45px;transform:scaleX(0.996);transform-origin:left center">Cari Hesap</div>
<div class="t b" style="left:1054px;top:77px;;letter-spacing:-0.12px">Birim / İş Birimi</div>
<div class="t b" style="left:1154px;top:77px;;letter-spacing:0.00px">Birim / Ambar</div>
<div class="t b" style="left:1254px;top:77px;;letter-spacing:-0.45px;transform:scaleX(0.925);transform-origin:left center">E-Fatura…</div>
<div class="t b" style="left:1314px;top:77px;;letter-spacing:-0.45px;transform:scaleX(0.979);transform-origin:left center">Fiş Açıklaması</div>
<svg class="a" style="left:532px;top:81px" width="8" height="4" viewBox="0 0 8 4"><path d="M0 0H8L4 4Z" fill="#000"/></svg>
<svg class="a" style="left:292px;top:122px" width="6" height="11" viewBox="0 0 6 11"><path d="M0 0L6 5.5L0 11Z" fill="#000"/></svg>
<div class="t w n" style="left:327px;top:121px;;letter-spacing:-0.45px;transform:scaleX(0.989);transform-origin:left center">01.11.2018 15:00</div>
<div class="t w n" style="left:427px;top:121px;;letter-spacing:-0.45px;transform:scaleX(0.961);transform-origin:left center">ABC2018000000001</div>
<div class="t w" style="left:647px;top:121px;;letter-spacing:-0.21px">Alım Faturası</div>
<div class="t w n" style="right:635px;top:121px;;letter-spacing:-0.45px;transform:scaleX(0.980);transform-origin:right center">22.892,00</div>
<div class="t w n" style="right:555px;top:121px;;letter-spacing:-0.45px;transform:scaleX(0.968);transform-origin:right center">0,00</div>
<div class="t w" style="left:934px;top:121px;;letter-spacing:-0.45px;transform:scaleX(0.901);transform-origin:left center">ADANA EKSPRES U…</div>
<div class="t w" style="left:1054px;top:121px;;letter-spacing:-0.31px">İç Anadolu Bölg…</div>
<div class="t w" style="left:1154px;top:121px;;letter-spacing:-0.19px">Ankara</div>
<!-- child -->
<div class="a" style="left:301px;top:140px;width:1180px;height:580px;background:#fff;border:1px solid #a8a8a8;box-shadow:0 1px 9px rgba(0,0,0,.24)"></div>
<div class="a" style="left:303px;top:141px;width:216px;height:29px;border:3px solid #e20613;border-radius:2px"></div>
<svg class="a" style="left:309px;top:147px" width="18" height="16" viewBox="0 0 18 16"><rect x="5.500" y="2" width="12" height="9.500" rx="1" fill="#e8dcc8" stroke="#b09870" stroke-width=".6"/><path d="M0.5 6H5.500V12H0.500Z" fill="#f4c820" stroke="#b89010" stroke-width=".6"/><rect x="1.300" y="6.800" width="3" height="2.400" fill="#a8d4f4"/><rect x="0.500" y="11.500" width="17" height="1.500" fill="#585858"/><circle cx="3.500" cy="13.500" r="2" fill="#181818"/><circle cx="3.500" cy="13.500" r=".8" fill="#c0c0c0"/><circle cx="13.500" cy="13.500" r="2" fill="#181818"/><circle cx="13.500" cy="13.500" r=".8" fill="#c0c0c0"/><defs><linearGradient id="g29" x1="0" y1="0" x2="0" y2="1"><stop offset="0" stop-color="#ffc080"/><stop offset="1" stop-color="#e8641c"/></linearGradient></defs><path d="M6.5 6.8L11.3 2.3V4.9H16.5V8.899999999999999H11.3V11.3Z" fill="url(#g29)" stroke="#c8561a" stroke-width=".7" stroke-linejoin="round"/></svg>
<div class="t " style="left:331px;top:149px;color:#9a9a9a;letter-spacing:-0.27px">Yeni Kayıt (Satınalma Faturası)</div>
<div class="a" style="left:1361px;top:155px;width:11px;height:1px;background:#555"></div>
<div class="a" style="left:1406px;top:150px;width:11px;height:11px;border:1px solid #444"></div>
<svg class="a" style="left:1451px;top:149px" width="12" height="12" viewBox="0 0 12 12"><path d="M0.5 0.5L11.5 11.5M11.5 0.5L0.5 11.5" stroke="#444" stroke-width="1"/></svg>
<div class="t " style="left:309px;top:174px;color:#5a5a5a;letter-spacing:-0.24px">Kayıt</div>
<div class="t " style="left:349px;top:174px;color:#5a5a5a;letter-spacing:-0.03px">İlgili Kayıtlar</div>
<div class="t " style="left:427px;top:174px;color:#5a5a5a;letter-spacing:-0.45px;transform:scaleX(0.986);transform-origin:left center">Yazdır</div>
<div class="t " style="left:475px;top:174px;color:#5a5a5a;letter-spacing:-0.16px">Şablonlar</div>
<div class="t " style="left:538px;top:174px;color:#5a5a5a;letter-spacing:-0.29px">Hesaplama</div>
<div class="t " style="left:611px;top:174px;color:#5a5a5a;letter-spacing:-0.34px">E-Fatura</div>
<div class="t " style="left:669px;top:174px;color:#5a5a5a;letter-spacing:-0.40px">Görev</div>
<div class="a" style="left:302px;top:189px;width:1178px;height:49px;background:#f0f0f0;border-bottom:1px solid #a0a0a0"></div>
<div class="a" style="left:306px;top:193px;width:2px;height:2px;background:#c4c4c4"></div>
<div class="a" style="left:306px;top:197px;width:2px;height:2px;background:#c4c4c4"></div>
<div class="a" style="left:306px;top:201px;width:2px;height:2px;background:#c4c4c4"></div>
<div class="a" style="left:306px;top:205px;width:2px;height:2px;background:#c4c4c4"></div>
<div class="a" style="left:306px;top:209px;width:2px;height:2px;background:#c4c4c4"></div>
<div class="a" style="left:306px;top:213px;width:2px;height:2px;background:#c4c4c4"></div>
<div class="a" style="left:306px;top:217px;width:2px;height:2px;background:#c4c4c4"></div>
<div class="a" style="left:306px;top:221px;width:2px;height:2px;background:#c4c4c4"></div>
<div class="a" style="left:306px;top:225px;width:2px;height:2px;background:#c4c4c4"></div>
<div class="a" style="left:306px;top:229px;width:2px;height:2px;background:#c4c4c4"></div>
<div class="a" style="left:306px;top:233px;width:2px;height:2px;background:#c4c4c4"></div>
<svg class="a" style="left:319px;top:197px" width="32" height="34" viewBox="0 0 32 34"><g transform="translate(2 2) skewY(9) translate(-2 -2)"><defs><linearGradient id="g30" x1="0" y1="0" x2="1" y2="1"><stop offset="0" stop-color="#5c90d8"/><stop offset="1" stop-color="#2858a8"/></linearGradient></defs><path d="M2 2.5H23L26 5.5V26.0H2Z" fill="url(#g30)" stroke="#244c90" stroke-width=".6"/><rect x="7.28" y="2.5" width="12.0" height="7.99" fill="#e8eef6"/><rect x="15.200000000000001" y="3.675" width="2.4000000000000004" height="5.64" fill="#3c68b4"/><rect x="5.12" y="13.075000000000001" width="17.759999999999998" height="12.925" fill="#f6f8fb"/><path d="M6.800000000000001 16.13H21.200000000000003M6.800000000000001 18.95H21.200000000000003M6.800000000000001 21.77H21.200000000000003" stroke="#b8c0cc" stroke-width=".8"/></g><defs><radialGradient id="g31" cx="0.4" cy="0.3" r=".8"><stop offset="0" stop-color="#a8e890"/><stop offset="1" stop-color="#2f9e2c"/></radialGradient></defs><circle cx="21.7" cy="25" r="7.5" fill="url(#g31)" stroke="#2c8a2a" stroke-width=".8"/><path d="M20.95 21.25A3.75 3.75 0 1 1 17.95 25.75" fill="none" stroke="#fff" stroke-width="2.55"/><path d="M15.325 24.625L20.575 24.25L17.7625 28.75Z" fill="#fff"/></svg>
<svg class="a" style="left:357px;top:197px" width="30" height="34" viewBox="0 0 30 34"><g transform="translate(3 2) skewY(9) translate(-3 -2)"><defs><linearGradient id="g32" x1="0" y1="0" x2="1" y2="1"><stop offset="0" stop-color="#5c90d8"/><stop offset="1" stop-color="#2858a8"/></linearGradient></defs><path d="M3 2.5H24L27 5.5V26.5H3Z" fill="url(#g32)" stroke="#244c90" stroke-width=".6"/><rect x="8.280000000000001" y="2.5" width="12.0" height="8.16" fill="#e8eef6"/><rect x="16.200000000000003" y="3.7" width="2.4000000000000004" height="5.76" fill="#3c68b4"/><rect x="6.12" y="13.3" width="17.759999999999998" height="13.200000000000001" fill="#f6f8fb"/><path d="M7.800000000000001 16.419999999999998H22.200000000000003M7.800000000000001 19.299999999999997H22.200000000000003M7.800000000000001 22.18H22.200000000000003" stroke="#b8c0cc" stroke-width=".8"/></g></svg>
<div class="t " style="left:392px;top:207px;;letter-spacing:-0.25px">Kaydet</div>
<svg class="a" style="left:442px;top:197px" width="32" height="34" viewBox="0 0 32 34"><g transform="translate(2 2) skewY(9) translate(-2 -2)"><defs><linearGradient id="g33" x1="0" y1="0" x2="1" y2="1"><stop offset="0" stop-color="#5c90d8"/><stop offset="1" stop-color="#2858a8"/></linearGradient></defs><path d="M2 2.5H23L26 5.5V26.0H2Z" fill="url(#g33)" stroke="#244c90" stroke-width=".6"/><rect x="7.28" y="2.5" width="12.0" height="7.99" fill="#e8eef6"/><rect x="15.200000000000001" y="3.675" width="2.4000000000000004" height="5.64" fill="#3c68b4"/><rect x="5.12" y="13.075000000000001" width="17.759999999999998" height="12.925" fill="#f6f8fb"/><path d="M6.800000000000001 16.13H21.200000000000003M6.800000000000001 18.95H21.200000000000003M6.800000000000001 21.77H21.200000000000003" stroke="#b8c0cc" stroke-width=".8"/></g><defs><radialGradient id="g34" cx="0.4" cy="0.3" r=".8"><stop offset="0" stop-color="#a8e890"/><stop offset="1" stop-color="#2f9e2c"/></radialGradient></defs><circle cx="21" cy="25" r="7.5" fill="url(#g34)" stroke="#2c8a2a" stroke-width=".8"/><path d="M16.65 25H25.35M21 20.65V29.35" stroke="#fff" stroke-width="3.15" stroke-linecap="round"/></svg>
<svg class="a" style="left:484px;top:199px" width="24" height="30" viewBox="0 0 24 30"><defs><linearGradient id="g35" x1="0" y1="0" x2="1" y2="1"><stop offset="0" stop-color="#f8fafc"/><stop offset="1" stop-color="#d4dce4"/></linearGradient></defs><path d="M2.5 5.0L17.5 3.5V26.5L2.5 27.5Z" fill="url(#g35)" stroke="#c4ccd4" stroke-width=".8"/><path d="M4.0 14.3L16.5 13.58" stroke="#fff" stroke-width="1.2"/><defs><radialGradient id="g36" cx="0.4" cy="0.3" r=".8"><stop offset="0" stop-color="#a8e890"/><stop offset="1" stop-color="#2f9e2c"/></radialGradient></defs><circle cx="13.7" cy="21" r="5" fill="url(#g36)" stroke="#2c8a2a" stroke-width=".8"/><path d="M10.799999999999999 21H16.599999999999998M13.7 18.1V23.9" stroke="#fff" stroke-width="2.10" stroke-linecap="round"/></svg>
<div class="t " style="left:515px;top:207px;;letter-spacing:-0.37px">Yeni</div>
<svg class="a" style="left:551px;top:198px" width="26" height="32" viewBox="0 0 26 32"><defs><linearGradient id="g37" x1="0" y1="0" x2="1" y2="0"><stop offset="0" stop-color="#d8d8d8"/><stop offset="1" stop-color="#8c8c8c"/></linearGradient></defs><path d="M2 5L4.04 25Q10.5 27 16.96 25L19 5Z" fill="url(#g37)" stroke="#808080" stroke-width=".7"/><ellipse cx="10.5" cy="5" rx="8.5" ry="2.2" fill="#d8d8d8" stroke="#808080" stroke-width=".7"/><path d="M9.14 9L7.1 16.2M12.54 8L9.65 19.5" stroke="#fff" stroke-width="1.6" opacity=".55"/><defs><radialGradient id="g38" cx="0.4" cy="0.3" r=".8"><stop offset="0" stop-color="#d8d8d8"/><stop offset="1" stop-color="#8c8c8c"/></radialGradient></defs><circle cx="17.5" cy="23" r="5.8" fill="url(#g38)" stroke="#787878" stroke-width=".8"/><path d="M15.064 20.564L19.936 25.436M19.936 20.564L15.064 25.436" stroke="#fff" stroke-width="2.32" stroke-linecap="round"/></svg>
<div class="t " style="left:584px;top:207px;color:#9a9a9a;letter-spacing:-0.45px;transform:scaleX(0.948);transform-origin:left center">Sil</div>
<svg class="a" style="left:606px;top:196px" width="36" height="36" viewBox="0 0 36 36"><defs><linearGradient id="g39" x1="0" y1="0" x2="1" y2="1"><stop offset="0" stop-color="#90e060"/><stop offset="1" stop-color="#38a028"/></linearGradient></defs><path d="M8.600 17L21.500 2.500L32.900 6.500L16.700 24.300Z" fill="url(#g39)" stroke="#2c8820" stroke-width=".7"/><circle cx="21" cy="16" r="3.200" fill="#68c848" stroke="#2c8820" stroke-width=".6"/><rect x="1" y="9" width="2" height="12.500" fill="#181818"/><path d="M3 10.500Q10 8 14 10L21 9L22 11L16 14L22 16L20 18.500L11 19L3 20Z" fill="#e8b880" stroke="#8c5c30" stroke-width=".7"/><path d="M6 28.500Q8 25 14 26L22 23.500L25 25L20 28.500L27 29L25 33L12 33Z" fill="#e8b880" stroke="#8c5c30" stroke-width=".7"/><path d="M28.500 28L33 27V35.500H25.500Z" fill="#181818"/></svg>
<div class="t " style="left:643px;top:207px;;letter-spacing:-0.08px">Ödemeler</div>
<svg class="a" style="left:711px;top:197px" width="28" height="34" viewBox="0 0 28 34"><defs><linearGradient id="g40" x1="0" y1="0" x2="0" y2="1"><stop offset="0" stop-color="#ffffff"/><stop offset="1" stop-color="#e4e9f0"/></linearGradient></defs><path d="M1.5 1.5H20.5L26.5 7.5V32.5H1.5Z" fill="url(#g40)" stroke="#9aa6b4" stroke-width=".8"/><path d="M20.5 1.5V7.5H26.5" fill="#dfe5ec" stroke="#9aa6b4" stroke-width=".6"/><path d="M5.5 7H9.5M5.5 9.5H8.5M12.5 9.5H15.5" stroke="#606870" stroke-width="1"/><path d="M5.5 12H15.5" stroke="#b8c0c8" stroke-width=".7"/><rect x="5.500" y="16.500" width="17" height="8.500" fill="#f4f8fc" stroke="#98a4b4" stroke-width=".8"/><rect x="6" y="17" width="16" height="2.500" fill="#d0dcec"/><path d="M11 17V25M16.500 17V25" stroke="#98a4b4" stroke-width=".7"/><path d="M5.500 28H13M5.500 30H10" stroke="#b8c0c8" stroke-width=".8"/></svg>
<div class="t " style="left:746px;top:207px;;letter-spacing:-0.06px">İşlemler</div>
<svg class="a" style="left:800px;top:212px" width="8" height="4" viewBox="0 0 8 4"><path d="M0 0H8L4 4Z" fill="#222"/></svg>
<svg class="a" style="left:816px;top:198px" width="34" height="32" viewBox="0 0 34 32"><rect x="3.500" y="4.500" width="23.500" height="18.500" fill="#f0f6fc" stroke="#a8b8cc" stroke-width=".8"/><rect x="4" y="5" width="22.500" height="3.200" fill="#c4d8f0"/><path d="M20 6.500H25.500" stroke="#4880d0" stroke-width="1.200"/><defs><linearGradient id="g41" x1="0" y1="0" x2="0" y2="1"><stop offset="0" stop-color="#ff8060"/><stop offset="1" stop-color="#d01c10"/></linearGradient></defs><path d="M7.500 19.500L11.500 15.500L16.500 21L28 9.500L32 13.500L17 30.500Z" fill="url(#g41)" stroke="#a81810" stroke-width=".7" stroke-linejoin="round"/></svg>
<svg class="a" style="left:860px;top:197px" width="28" height="34" viewBox="0 0 28 34"><defs><linearGradient id="g43" x1="0" y1="0" x2="0" y2="1"><stop offset="0" stop-color="#ffffff"/><stop offset="1" stop-color="#e4e9f0"/></linearGradient></defs><path d="M1.5 1.5H20.5L26.5 7.5V32.5H1.5Z" fill="url(#g43)" stroke="#9aa6b4" stroke-width=".8"/><path d="M20.5 1.5V7.5H26.5" fill="#dfe5ec" stroke="#9aa6b4" stroke-width=".6"/><path d="M5.5 7H9.5M5.5 9.5H8.5M12.5 9.5H15.5" stroke="#606870" stroke-width="1"/><path d="M5.5 12H15.5" stroke="#b8c0c8" stroke-width=".7"/><defs><linearGradient id="g42" x1="0" y1="0" x2="0" y2="1"><stop offset="0" stop-color="#90e0a0"/><stop offset="1" stop-color="#209838"/></linearGradient></defs><path d="M3 17.500H9L14 21.500V17L24 24L14 31V26.500L9 30H3L10 24Z" fill="url(#g42)" stroke="#1c8830" stroke-width=".7" stroke-linejoin="round"/></svg>
<div class="t " style="left:895px;top:207px;;letter-spacing:0.05px">İçeri Al</div>
<svg class="a" style="left:945px;top:212px" width="8" height="4" viewBox="0 0 8 4"><path d="M0 0H8L4 4Z" fill="#222"/></svg>
<div class="a" style="left:302px;top:238px;width:1178px;height:470px;background:#f0f0f0"></div>
<div class="a" style="left:378px;top:244px;width:53px;height:20px;background:#f0f0f0;border:1px solid #d9d9d9;border-bottom:0"></div>
<div class="t " style="left:382px;top:248px;;letter-spacing:-0.16px">Detaylar</div>
<div class="a" style="left:430px;top:244px;width:50px;height:20px;background:#d9eaf9;border:1px solid #d9d9d9;border-bottom:0"></div>
<div class="t " style="left:437px;top:248px;;letter-spacing:0.36px">Notlar</div>
<div class="a" style="left:479px;top:244px;width:56px;height:20px;background:#f0f0f0;border:1px solid #d9d9d9;border-bottom:0"></div>
<div class="t " style="left:485.5px;top:248px;;letter-spacing:-0.25px">Sevkiyat</div>
<div class="a" style="left:534px;top:244px;width:77px;height:20px;background:#f0f0f0;border:1px solid #d9d9d9;border-bottom:0"></div>
<div class="t " style="left:540px;top:248px;;letter-spacing:-0.17px">Belge Dövizi</div>
<div class="a" style="left:610px;top:244px;width:62px;height:20px;background:#f0f0f0;border:1px solid #d9d9d9;border-bottom:0"></div>
<div class="t " style="left:616px;top:248px;;letter-spacing:-0.14px">İrsaliyeler</div>
<div class="a" style="left:671px;top:244px;width:48px;height:20px;background:#f0f0f0;border:1px solid #d9d9d9;border-bottom:0"></div>
<div class="t " style="left:677px;top:248px;;letter-spacing:-0.40px">Belge</div>
<div class="a" style="left:718px;top:244px;width:62px;height:20px;background:#f0f0f0;border:1px solid #d9d9d9;border-bottom:0"></div>
<div class="t " style="left:725px;top:248px;;letter-spacing:-0.45px;transform:scaleX(0.997);transform-origin:left center">Sözleşme</div>
<div class="a" style="left:779px;top:244px;width:82px;height:20px;background:#f0f0f0;border:1px solid #d9d9d9;border-bottom:0"></div>
<div class="t " style="left:786px;top:248px;;letter-spacing:-0.32px">Kapalı Fatura</div>
<div class="a" style="left:860px;top:244px;width:73px;height:20px;background:#f0f0f0;border:1px solid #d9d9d9;border-bottom:0"></div>
<div class="t " style="left:866px;top:248px;;letter-spacing:-0.19px">Beyanname</div>
<div class="a" style="left:306px;top:263px;width:1168px;height:116px;background:#fff;border:1px solid #d9d9d9"></div>
<div class="a" style="left:306px;top:242px;width:72px;height:22px;background:#fff;border:1px solid #d9d9d9;border-bottom:0"></div>
<div class="t " style="left:314px;top:246px;;letter-spacing:-0.13px">Fiş Bilgileri</div>
<div class="t " style="left:314px;top:273px;;letter-spacing:-0.14px">Fatura Tarihi</div>
<div class="t " style="left:314px;top:297px;;letter-spacing:-0.14px">Fatura No</div>
<div class="t " style="left:314px;top:322px;;letter-spacing:-0.17px">Belge / Seri No</div>
<div class="t " style="left:314px;top:345px;;letter-spacing:-0.30px">Cari Hesap</div>
<div class="inp" style="left:400px;top:270px;width:120px;height:20px"></div>
<div class="t  n" style="left:405.5px;top:273px;;letter-spacing:-0.45px;transform:scaleX(0.986);transform-origin:left center">06.11.2018 13:35</div>
<div class="eb" style="left:502px;top:272px"></div>
<svg class="a" style="left:505px;top:276.5px" width="10" height="7" viewBox="0 0 10 7"><path d="M.7 1L5 5.300L9.300 1" fill="none" stroke="#17356f" stroke-width="2.1"/></svg>
<div class="t " style="left:528px;top:273px;;letter-spacing:-0.17px">Düzenleme Zamanı</div>
<div class="inp" style="left:638px;top:270px;width:120px;height:20px"></div>
<div class="t  n" style="left:643.5px;top:273px;;letter-spacing:-0.45px;transform:scaleX(0.986);transform-origin:left center">06.11.2018 13:33</div>
<div class="eb" style="left:740px;top:272px"></div>
<svg class="a" style="left:743px;top:276.5px" width="10" height="7" viewBox="0 0 10 7"><path d="M.7 1L5 5.300L9.300 1" fill="none" stroke="#17356f" stroke-width="2.1"/></svg>
<div class="inpd" style="left:400px;top:293px;width:520px;height:21px"></div>
<div class="t  n" style="left:406px;top:297px;;letter-spacing:-0.45px;transform:scaleX(0.976);transform-origin:left center">ABC2018000000002</div>
<svg class="a" style="left:925px;top:296px" width="16" height="16" viewBox="0 0 16 16"><path d="M2 9A4 4 0 0 1 9 5.500" fill="none" stroke="#e8b418" stroke-width="2.4"/><path d="M7.500 2.500L12 6L7 8Z" fill="#e8b418"/><path d="M14 7A4 4 0 0 1 7 10.500" fill="none" stroke="#e8b418" stroke-width="2.4"/><path d="M8.500 13.500L4 10L9 8Z" fill="#e8b418"/></svg>
<svg class="a" style="left:946px;top:302px" width="8" height="4" viewBox="0 0 8 4"><path d="M0 0H8L4 4Z" fill="#222"/></svg>
<div class="inpd" style="left:400px;top:318px;width:275px;height:21px"></div>
<div class="inpd" style="left:683px;top:318px;width:276px;height:21px"></div>
<div class="inp" style="left:400px;top:342px;width:559px;height:20px"></div>
<div class="t " style="left:405px;top:345px;letter-spacing:-0.62px;letter-spacing:-0.45px;transform:scaleX(0.999);transform-origin:left center">ADA DANIŞMANLIK DIŞ TİCARET LTD. ŞTİ. [ADA DANIŞMANLIK DIŞ TİCARET LTD. ŞTİ.]</div>
<div class="eb" style="left:923px;top:344px"></div>
<svg class="a" style="left:926px;top:354px" width="10" height="3" viewBox="0 0 10 3"><rect x="0" y="0" width="2" height="2" fill="#15305f"/><rect x="4" y="0" width="2" height="2" fill="#15305f"/><rect x="8" y="0" width="2" height="2" fill="#15305f"/></svg>
<div class="eb" style="left:940px;top:344px"></div>
<svg class="a" style="left:943px;top:348px" width="10" height="9" viewBox="0 0 10 9"><rect x="0.5" y="0.5" width="9" height="8" fill="#f4f8fe" stroke="#7c9ccc"/><rect x="1" y="1" width="8" height="2" fill="#8fb0e0"/><rect x="2.500" y="5" width="5" height="1" fill="#9aa8c0"/></svg>
<div class="t " style="left:974px;top:273px;;letter-spacing:-0.03px">İş Birimi</div>
<div class="inp" style="left:1050px;top:270px;width:201px;height:20px"></div>
<div class="t" style="left:1055px;top:273px;width:160px;overflow:hidden">1 - İç Anadolu Bölgesi [İç Anac</div>
<div class="eb" style="left:1215px;top:272px"></div>
<svg class="a" style="left:1218px;top:282px" width="10" height="3" viewBox="0 0 10 3"><rect x="0" y="0" width="2" height="2" fill="#15305f"/><rect x="4" y="0" width="2" height="2" fill="#15305f"/><rect x="8" y="0" width="2" height="2" fill="#15305f"/></svg>
<div class="eb" style="left:1232px;top:272px"></div>
<svg class="a" style="left:1235px;top:276px" width="10" height="9" viewBox="0 0 10 9"><rect x="0.5" y="0.5" width="9" height="8" fill="#f4f8fe" stroke="#7c9ccc"/><rect x="1" y="1" width="8" height="2" fill="#8fb0e0"/><rect x="2.500" y="5" width="5" height="1" fill="#9aa8c0"/></svg>
<div class="t " style="left:974px;top:296px;;letter-spacing:0.19px">Ambar</div>
<div class="inp" style="left:1050px;top:293px;width:201px;height:20px"></div>
<div class="t" style="left:1055px;top:296px;width:160px;overflow:hidden">Ankara</div>
<div class="eb" style="left:1215px;top:295px"></div>
<svg class="a" style="left:1218px;top:305px" width="10" height="3" viewBox="0 0 10 3"><rect x="0" y="0" width="2" height="2" fill="#15305f"/><rect x="4" y="0" width="2" height="2" fill="#15305f"/><rect x="8" y="0" width="2" height="2" fill="#15305f"/></svg>
<div class="eb" style="left:1232px;top:295px"></div>
<svg class="a" style="left:1235px;top:299px" width="10" height="9" viewBox="0 0 10 9"><rect x="0.5" y="0.5" width="9" height="8" fill="#f4f8fe" stroke="#7c9ccc"/><rect x="1" y="1" width="8" height="2" fill="#8fb0e0"/><rect x="2.500" y="5" width="5" height="1" fill="#9aa8c0"/></svg>
<div class="t " style="left:974px;top:319px;;letter-spacing:-0.02px">Org. Birim</div>
<div class="inp" style="left:1050px;top:316px;width:201px;height:20px"></div>
<div class="eb" style="left:1215px;top:318px"></div>
<svg class="a" style="left:1218px;top:328px" width="10" height="3" viewBox="0 0 10 3"><rect x="0" y="0" width="2" height="2" fill="#15305f"/><rect x="4" y="0" width="2" height="2" fill="#15305f"/><rect x="8" y="0" width="2" height="2" fill="#15305f"/></svg>
<div class="eb" style="left:1232px;top:318px"></div>
<svg class="a" style="left:1235px;top:322px" width="10" height="9" viewBox="0 0 10 9"><rect x="0.5" y="0.5" width="9" height="8" fill="#f4f8fe" stroke="#7c9ccc"/><rect x="1" y="1" width="8" height="2" fill="#8fb0e0"/><rect x="2.500" y="5" width="5" height="1" fill="#9aa8c0"/></svg>
<div class="t " style="left:974px;top:342px;;letter-spacing:-0.15px">Ödeme Planı</div>
<div class="inp" style="left:1050px;top:339px;width:201px;height:20px"></div>
<div class="eb" style="left:1215px;top:341px"></div>
<svg class="a" style="left:1218px;top:351px" width="10" height="3" viewBox="0 0 10 3"><rect x="0" y="0" width="2" height="2" fill="#15305f"/><rect x="4" y="0" width="2" height="2" fill="#15305f"/><rect x="8" y="0" width="2" height="2" fill="#15305f"/></svg>
<div class="eb" style="left:1232px;top:341px"></div>
<svg class="a" style="left:1235px;top:345px" width="10" height="9" viewBox="0 0 10 9"><rect x="0.5" y="0.5" width="9" height="8" fill="#f4f8fe" stroke="#7c9ccc"/><rect x="1" y="1" width="8" height="2" fill="#8fb0e0"/><rect x="2.500" y="5" width="5" height="1" fill="#9aa8c0"/></svg>
<div class="t " style="left:1266px;top:275px;;letter-spacing:-0.10px">Fatura Türü</div>
<div class="t " style="left:1266px;top:301px;;letter-spacing:0.22px">Durumu</div>
<div class="t " style="left:1266px;top:325px;;letter-spacing:-0.08px">Yetki Kodu</div>
<div class="t " style="left:1266px;top:348px;;letter-spacing:-0.25px">Personel</div>
<div class="a" style="left:1335px;top:271px;width:125px;height:22px;background:#cccccc;border:1px solid #bfbfbf"></div>
<div class="t " style="left:1339px;top:275px;color:#8a8a8a;letter-spacing:-0.21px">Alım Faturası</div>
<svg class="a" style="left:1444px;top:279px" width="10" height="6" viewBox="0 0 10 6"><path d="M0.5 0.5L5 5L9.5 0.5" fill="none" stroke="#b0b0b0" stroke-width="1"/></svg>
<div class="a" style="left:1335px;top:296px;width:125px;height:23px;background:#e1e1e1;border:1px solid #adadad"></div>
<div class="t " style="left:1339px;top:301px;;letter-spacing:-0.22px">Onaylı</div>
<svg class="a" style="left:1444px;top:304px" width="10" height="6" viewBox="0 0 10 6"><path d="M0.5 0.5L5 5L9.5 0.5" fill="none" stroke="#333" stroke-width="1.1"/></svg>
<div class="inp" style="left:1335px;top:322px;width:125px;height:20px"></div>
<div class="eb" style="left:1424px;top:324px"></div>
<svg class="a" style="left:1427px;top:334px" width="10" height="3" viewBox="0 0 10 3"><rect x="0" y="0" width="2" height="2" fill="#15305f"/><rect x="4" y="0" width="2" height="2" fill="#15305f"/><rect x="8" y="0" width="2" height="2" fill="#15305f"/></svg>
<div class="eb" style="left:1441px;top:324px"></div>
<svg class="a" style="left:1444px;top:328px" width="10" height="9" viewBox="0 0 10 9"><rect x="0.5" y="0.5" width="9" height="8" fill="#f4f8fe" stroke="#7c9ccc"/><rect x="1" y="1" width="8" height="2" fill="#8fb0e0"/><rect x="2.500" y="5" width="5" height="1" fill="#9aa8c0"/></svg>
<div class="inp" style="left:1335px;top:345px;width:125px;height:20px"></div>
<div class="t" style="left:1340px;top:348px;width:84px;overflow:hidden">Engin İlker Doğa</div>
<div class="eb" style="left:1424px;top:347px"></div>
<svg class="a" style="left:1427px;top:357px" width="10" height="3" viewBox="0 0 10 3"><rect x="0" y="0" width="2" height="2" fill="#15305f"/><rect x="4" y="0" width="2" height="2" fill="#15305f"/><rect x="8" y="0" width="2" height="2" fill="#15305f"/></svg>
<div class="eb" style="left:1441px;top:347px"></div>
<svg class="a" style="left:1444px;top:351px" width="10" height="9" viewBox="0 0 10 9"><rect x="0.5" y="0.5" width="9" height="8" fill="#f4f8fe" stroke="#7c9ccc"/><rect x="1" y="1" width="8" height="2" fill="#8fb0e0"/><rect x="2.500" y="5" width="5" height="1" fill="#9aa8c0"/></svg>
<div class="a" style="left:306px;top:384px;width:1170px;height:317px;background:#fff"></div>
<div class="a" style="left:306px;top:384px;width:1146px;height:235px;background:#fff"></div>
<div class="gh" style="left:306px;top:384px;width:1130px;height:23px"></div>
<div class="a" style="left:306px;top:407px;width:24px;height:69px;background:#d4e3fb"></div>
<div class="a" style="left:330px;top:430px;width:1106px;height:23px;background:#e6ebfc"></div>
<div class="a" style="left:330px;top:407px;width:100px;height:23px;background:#5f9acb"></div>
<div class="a" style="left:329px;top:384px;width:1px;height:23px;background:#c3d6ee"></div>
<div class="a" style="left:329px;top:407px;width:1px;height:69px;background:#dcdcdc"></div>
<div class="a" style="left:429px;top:384px;width:1px;height:23px;background:#c3d6ee"></div>
<div class="a" style="left:429px;top:407px;width:1px;height:69px;background:#dcdcdc"></div>
<div class="a" style="left:589px;top:384px;width:1px;height:23px;background:#c3d6ee"></div>
<div class="a" style="left:589px;top:407px;width:1px;height:69px;background:#dcdcdc"></div>
<div class="a" style="left:709px;top:384px;width:1px;height:23px;background:#c3d6ee"></div>
<div class="a" style="left:709px;top:407px;width:1px;height:69px;background:#dcdcdc"></div>
<div class="a" style="left:789px;top:384px;width:1px;height:23px;background:#c3d6ee"></div>
<div class="a" style="left:789px;top:407px;width:1px;height:69px;background:#dcdcdc"></div>
<div class="a" style="left:929px;top:384px;width:1px;height:23px;background:#c3d6ee"></div>
<div class="a" style="left:929px;top:407px;width:1px;height:69px;background:#dcdcdc"></div>
<div class="a" style="left:1089px;top:384px;width:1px;height:23px;background:#c3d6ee"></div>
<div class="a" style="left:1089px;top:407px;width:1px;height:69px;background:#dcdcdc"></div>
<div class="a" style="left:1189px;top:384px;width:1px;height:23px;background:#c3d6ee"></div>
<div class="a" style="left:1189px;top:407px;width:1px;height:69px;background:#dcdcdc"></div>
<div class="a" style="left:1309px;top:384px;width:1px;height:23px;background:#c3d6ee"></div>
<div class="a" style="left:1309px;top:407px;width:1px;height:69px;background:#dcdcdc"></div>
<div class="a" style="left:1409px;top:384px;width:1px;height:23px;background:#c3d6ee"></div>
<div class="a" style="left:1409px;top:407px;width:1px;height:69px;background:#dcdcdc"></div>
<div class="a" style="left:330px;top:429px;width:1106px;height:1px;background:#e0e0e0"></div>
<div class="a" style="left:306px;top:429px;width:24px;height:1px;background:#dce8fb"></div>
<div class="a" style="left:330px;top:452px;width:1106px;height:1px;background:#e0e0e0"></div>
<div class="a" style="left:306px;top:452px;width:24px;height:1px;background:#dce8fb"></div>
<div class="a" style="left:330px;top:475px;width:1106px;height:1px;background:#e0e0e0"></div>
<div class="a" style="left:306px;top:475px;width:24px;height:1px;background:#dce8fb"></div>
<div class="t b" style="left:334px;top:389px;;letter-spacing:-0.17px">Tür</div>
<div class="t b" style="left:434px;top:389px;;letter-spacing:-0.29px">Satır Öğesi</div>
<div class="t b" style="left:594px;top:389px;;letter-spacing:0.12px">Birim/Paket</div>
<div class="t b" style="left:1326px;top:389px;;letter-spacing:-0.16px">Ek Vergi Paketi</div>
<div class="t b" style="right:695px;top:389px;;letter-spacing:0.37px">Miktar</div>
<div class="t b" style="right:554px;top:389px;;letter-spacing:-0.39px">Birim Fiyat</div>
<div class="t b" style="right:394px;top:389px;;letter-spacing:0.02px">Tutar</div>
<div class="t b" style="right:294px;top:389px;;letter-spacing:-0.42px">KDV</div>
<div class="t b" style="right:173px;top:389px;;letter-spacing:0.20px">Net Tutar</div>
<svg class="a" style="left:316px;top:413px" width="6" height="11" viewBox="0 0 6 11"><path d="M0 0L6 5.5L0 11Z" fill="#000"/></svg>
<div class="t " style="left:314.5px;top:435px;color:#777">2</div>
<div class="t " style="left:314.5px;top:458px;color:#777">3</div>
<div class="t " style="left:336px;top:412px;color:#fff;letter-spacing:0.21px">Ürün/Hizmet</div>
<div class="t " style="left:434px;top:412px;;letter-spacing:-0.45px;transform:scaleX(0.978);transform-origin:left center">001.01.01 [Casper Excalibur …</div>
<div class="t " style="left:594px;top:412px;;letter-spacing:0.14px">Adet</div>
<div class="t " style="right:695px;top:412px;">3</div>
<div class="t  n" style="right:555px;top:412px;;letter-spacing:-0.45px;transform:scaleX(0.958);transform-origin:right center">64,52029163</div>
<div class="t  n" style="right:395px;top:412px;;letter-spacing:-0.45px;transform:scaleX(0.981);transform-origin:right center">193,56</div>
<div class="t  n" style="left:1094px;top:412px;color:#8a8a8a;letter-spacing:-0.45px;transform:scaleX(0.955);transform-origin:left center">%18</div>
<div class="t  n" style="right:295px;top:412px;;letter-spacing:-0.45px;transform:scaleX(0.949);transform-origin:right center">34,84</div>
<div class="t  n" style="right:175px;top:412px;;letter-spacing:-0.42px">228,40 [193,56]</div>
<div class="t " style="left:336px;top:435px;;letter-spacing:0.21px">Ürün/Hizmet</div>
<div class="t " style="left:434px;top:435px;;letter-spacing:-0.45px;transform:scaleX(0.978);transform-origin:left center">001.01.02 [Casper Excalibur …</div>
<div class="t " style="left:594px;top:435px;;letter-spacing:0.14px">Adet</div>
<div class="t " style="right:695px;top:435px;">1</div>
<div class="t  n" style="right:555px;top:435px;;letter-spacing:-0.45px;transform:scaleX(0.962);transform-origin:right center">439,30253564</div>
<div class="t  n" style="right:395px;top:435px;;letter-spacing:-0.45px;transform:scaleX(0.981);transform-origin:right center">439,30</div>
<div class="t " style="left:1094px;top:435px;color:#8a8a8a;letter-spacing:-0.45px;transform:scaleX(0.947);transform-origin:left center">%8</div>
<div class="t  n" style="right:295px;top:435px;;letter-spacing:-0.45px;transform:scaleX(0.949);transform-origin:right center">35,14</div>
<div class="t  n" style="right:175px;top:435px;;letter-spacing:-0.41px">474,44 [439,3]</div>
<div class="t " style="left:336px;top:458px;;letter-spacing:0.21px">Ürün/Hizmet</div>
<div class="t " style="left:434px;top:458px;;letter-spacing:-0.45px;transform:scaleX(0.978);transform-origin:left center">001.01.03 [Casper Excalibur …</div>
<div class="t " style="left:594px;top:458px;;letter-spacing:0.14px">Adet</div>
<div class="t " style="right:695px;top:458px;">1</div>
<div class="t  n" style="right:555px;top:458px;;letter-spacing:-0.45px;transform:scaleX(0.958);transform-origin:right center">100,00</div>
<div class="t  n" style="right:395px;top:458px;;letter-spacing:-0.45px;transform:scaleX(0.958);transform-origin:right center">100,00</div>
<div class="t  n" style="left:1094px;top:458px;color:#8a8a8a;letter-spacing:-0.45px;transform:scaleX(0.955);transform-origin:left center">%18</div>
<div class="t  n" style="right:295px;top:458px;;letter-spacing:-0.45px;transform:scaleX(0.949);transform-origin:right center">18,00</div>
<div class="t  n" style="right:175px;top:458px;;letter-spacing:-0.44px">118,00 [100]</div>
<div class="a" style="left:1436px;top:384px;width:16px;height:219px;background:#f0f0f0"></div>
<svg class="a" style="left:1440px;top:391px" width="9" height="6" viewBox="0 0 9 6"><path d="M0.7 5.3L4.5 1.2L8.3 5.3" fill="none" stroke="#c0c0c0" stroke-width="1.4"/></svg>
<svg class="a" style="left:1440px;top:590px" width="9" height="6" viewBox="0 0 9 6"><path d="M0.7 0.7L4.5 4.8L8.3 0.7" fill="none" stroke="#c0c0c0" stroke-width="1.4"/></svg>
<div class="a" style="left:306px;top:603px;width:1146px;height:16px;background:#f0f0f0"></div>
<div class="a" style="left:323px;top:603px;width:669px;height:16px;background:#cdcdcd"></div>
<svg class="a" style="left:311px;top:606px" width="6" height="9" viewBox="0 0 6 9"><path d="M5 0.7L1.2 4.5L5 8.3" fill="none" stroke="#444" stroke-width="1.6"/></svg>
<svg class="a" style="left:1424px;top:606px" width="6" height="9" viewBox="0 0 6 9"><path d="M1 0.7L4.8 4.5L1 8.3" fill="none" stroke="#444" stroke-width="1.6"/></svg>
<div class="a" style="left:1452px;top:384px;width:24px;height:235px;background:#fff"></div>
<svg class="a" style="left:1456px;top:385px" width="17" height="16" viewBox="0 0 17 16"><path d="M4.500 2.500H12.500" stroke="#a0a0a0" stroke-width="1.600"/><path d="M8.500 4.500L12.500 9H10.500V13H6.500V9H4.500Z" fill="#f4f4f4" stroke="#a0a0a0" stroke-width=".9"/></svg>
<svg class="a" style="left:1456px;top:407px" width="17" height="16" viewBox="0 0 17 16"><path d="M4 8L8 3.500V6.500Q13 6.500 13 11.500Q11.500 9.500 8 9.500V12.500Z" fill="#f4f4f4" stroke="#a0a0a0" stroke-width=".9"/><path d="M5 14.500H13" stroke="#a0a0a0" stroke-width="1.200"/></svg>
<svg class="a" style="left:1456px;top:431px" width="17" height="16" viewBox="0 0 17 16"><rect x="3" y="2" width="2.500" height="2.500" fill="#4878c0"/><path d="M7 3.300H13" stroke="#687890" stroke-width="1"/><path d="M4 10L8.500 5.500V8Q13.500 7.500 13.500 4.500Q15 12 8.500 12V14.500Z" fill="#f8d040" stroke="#a87c10" stroke-width=".9" stroke-linejoin="round"/></svg>
<svg class="a" style="left:1456px;top:453px" width="17" height="16" viewBox="0 0 17 16"><path d="M6.500 2V6.500H4L8.500 11L13 6.500H10.500V2Z" fill="#f8d040" stroke="#a87c10" stroke-width=".9" stroke-linejoin="round"/><rect x="3.500" y="12.500" width="10" height="2.500" fill="#dce8f8" stroke="#4878c0" stroke-width=".9"/></svg>
<svg class="a" style="left:1456px;top:484px" width="17" height="16" viewBox="0 0 17 16"><path d="M3 3.5H8V1.0L12 5.0L8 9.0V6.5H3Z" fill="#f8d040" stroke="#a87c10" stroke-width=".9" stroke-linejoin="round"/><path d="M10.500 8.0H16M13.200 5.3V10.7" stroke="#a87c10" stroke-width="2.600"/><path d="M11.300 8.0H15.200M13.200 6.1V9.9" stroke="#f8d848" stroke-width="1.200"/><rect x="3" y="11" width="2" height="2" fill="#4878c0"/><path d="M6.500 12H10M3 15H9" stroke="#687890" stroke-width="1"/></svg>
<svg class="a" style="left:1456px;top:505px" width="17" height="16" viewBox="0 0 17 16"><rect x="3" y="1.500" width="2" height="2" fill="#4878c0"/><path d="M6.500 2.500H11" stroke="#687890" stroke-width="1"/><path d="M3 6.5H8V4.0L12 8.0L8 12.0V9.5H3Z" fill="#f8d040" stroke="#a87c10" stroke-width=".9" stroke-linejoin="round"/><path d="M10.500 11.0H16M13.200 8.3V13.7" stroke="#a87c10" stroke-width="2.600"/><path d="M11.300 11.0H15.200M13.200 9.1V12.9" stroke="#f8d848" stroke-width="1.200"/></svg>
<svg class="a" style="left:1456px;top:527px" width="17" height="16" viewBox="0 0 17 16"><rect x="3" y="1" width="2" height="2" fill="#4878c0"/><path d="M6.500 2H12M3 5H5M6.500 5H10" stroke="#687890" stroke-width="1"/><path d="M3 9H8V6.500L12 10.500L8 14.500V12H3Z" fill="#dce8f8" stroke="#2c58a8" stroke-width=".9" stroke-linejoin="round"/><path d="M10.500 12.500H16M13.200 9.800V15.200" stroke="#2c58a8" stroke-width="2.600"/><path d="M11.300 12.500H15.200M13.200 10.600V14.400" stroke="#dce8f8" stroke-width="1.200"/></svg>
<svg class="a" style="left:1456px;top:557px" width="17" height="16" viewBox="0 0 17 16"><path d="M3.500 3L8.500 6.500L13.500 3L15 5L10.500 8.500L15 12.500L13 14.500L8.500 10.500L4 14.500L2 12.500L6.500 8.500L2 5Z" fill="#e82c2c" stroke="#b81818" stroke-width=".7" stroke-linejoin="round"/></svg>
<div class="a" style="left:1456px;top:474px;width:17px;height:1px;background:#a0a0a0"></div>
<div class="a" style="left:1456px;top:548px;width:17px;height:1px;background:#a0a0a0"></div>
<div class="a" style="left:309px;top:619px;width:45px;height:20px;background:#fff;border:1px solid #b0b0b0;border-bottom:0;border-radius:2px 2px 0 0"></div>
<div class="a" style="left:353px;top:638px;width:679px;height:1px;background:#b0b0b0"></div>
<div class="t " style="left:313px;top:623px;;letter-spacing:-0.25px">Barkod</div>
<div class="inpd" style="left:309px;top:640px;width:723px;height:21px"></div>
<div class="t " style="left:1040px;top:626px;;letter-spacing:-0.36px">Hesaplan KDV</div>
<div class="a" style="left:1132px;top:625px;width:110px;height:15px;background:#f0f0f0"></div>
<div class="t b" style="right:243.5px;top:625.5px;;letter-spacing:0.13px">87,98 €</div>
<div class="t " style="left:1250px;top:626px;;letter-spacing:0.13px">Toplam Tutar</div>
<div class="a" style="left:1342px;top:625px;width:110px;height:15px;background:#f0f0f0"></div>
<div class="t b" style="right:33.5px;top:625.5px;;letter-spacing:0.30px">732,86 €</div>
<div class="t " style="left:1040px;top:644px;;letter-spacing:0.06px">Toplam Masraf</div>
<div class="a" style="left:1132px;top:643px;width:110px;height:15px;background:#f0f0f0"></div>
<div class="t b" style="right:243.5px;top:643.5px;;letter-spacing:0.08px">0,00 €</div>
<div class="t " style="left:1250px;top:644px;;letter-spacing:0.20px">Toplam İndirim</div>
<div class="a" style="left:1342px;top:643px;width:110px;height:15px;background:#f0f0f0"></div>
<div class="t b" style="right:33.5px;top:643.5px;;letter-spacing:0.08px">0,00 €</div>
<div class="t " style="left:1040px;top:662px;;letter-spacing:-0.21px">Toplam Ek Vergi</div>
<div class="a" style="left:1132px;top:661px;width:110px;height:15px;background:#f0f0f0"></div>
<div class="t b" style="right:243.5px;top:661.5px;;letter-spacing:0.08px">0,00 €</div>
<div class="t " style="left:1250px;top:662px;;letter-spacing:-0.12px">Ödenecek Tutar</div>
<div class="a" style="left:1342px;top:661px;width:110px;height:15px;background:#f0f0f0"></div>
<div class="t b" style="right:33.5px;top:661.5px;;letter-spacing:0.30px">820,84 €</div>
<div class="t " style="left:1040px;top:680px;;letter-spacing:-0.45px;transform:scaleX(0.965);transform-origin:left center">Satır Sayısı</div>
<div class="a" style="left:1132px;top:679px;width:110px;height:15px;background:#f0f0f0"></div>
<div class="t b" style="right:243.5px;top:679.5px;">3</div>
<div class="t " style="left:1250px;top:680px;;letter-spacing:-0.36px">YPB Tutar</div>
<div class="a" style="left:1342px;top:679px;width:110px;height:15px;background:#f0f0f0"></div>
<div class="t b" style="right:33.5px;top:679.5px;;letter-spacing:0.30px">5.088,88</div>
</body></html>
